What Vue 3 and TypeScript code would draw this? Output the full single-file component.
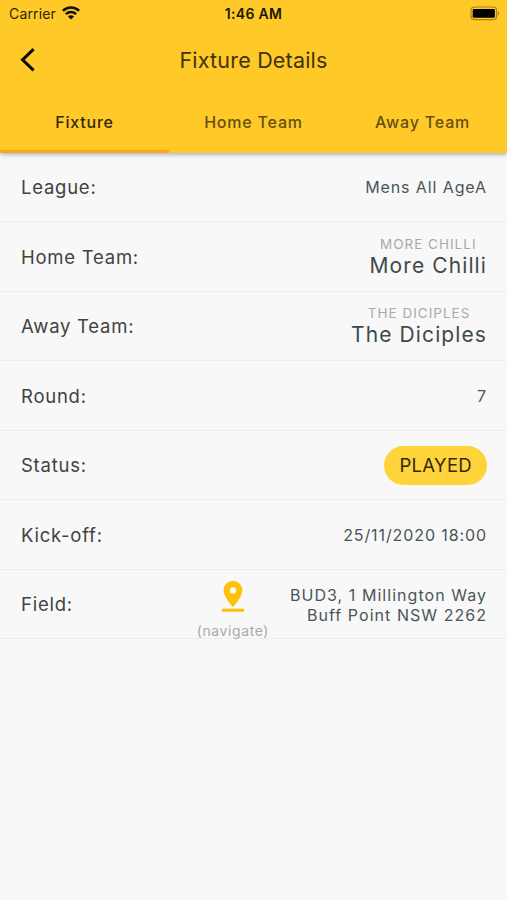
<script setup lang="ts">
import { ref } from 'vue'

interface Row {
  label: string
  kind: 'text' | 'team' | 'status' | 'field'
  value: string
  extra?: string
}

const tabs: string[] = ['Fixture', 'Home Team', 'Away Team']
const active = ref(0)

const rows: Row[] = [
  { label: 'League:', kind: 'text', value: 'Mens All AgeA' },
  { label: 'Home Team:', kind: 'team', value: 'More Chilli', extra: 'MORE CHILLI' },
  { label: 'Away Team:', kind: 'team', value: 'The Diciples', extra: 'THE DICIPLES' },
  { label: 'Round:', kind: 'text', value: '7' },
  { label: 'Status:', kind: 'status', value: 'PLAYED' },
  { label: 'Kick-off:', kind: 'text', value: '25/11/2020 18:00' },
  { label: 'Field:', kind: 'field', value: 'BUD3, 1 Millington Way', extra: 'Buff Point NSW 2262' },
]
</script>

<template>
  <div class="screen">
    <header class="header">
      <div class="statusbar">
        <div class="carrier">
          <span>Carrier</span>
          <svg class="wifi" width="18" height="14" viewBox="0 0 18 14">
            <g fill="none" stroke="#111" stroke-width="2.5">
              <path d="M0.9 4.9a11.5 11.5 0 0 1 16.2 0" />
              <path d="M3.9 8.1a7.2 7.2 0 0 1 10.2 0" />
            </g>
            <path d="M9 13.6L5.9 10.5a4.4 4.4 0 0 1 6.2 0z" fill="#111" />
          </svg>
        </div>
        <span class="clock">1:46 AM</span>
        <svg class="battery" width="30" height="15" viewBox="0 0 30 15">
          <rect x="1" y="1" width="25.6" height="12.6" rx="3.4" fill="none" stroke="#a98518" stroke-width="1.2" />
          <rect x="2.7" y="2.9" width="22.2" height="8.8" rx="1.2" fill="#000" />
          <path d="M28 5.2q2.6 2.1 0 4.2z" fill="#a98518" />
        </svg>
      </div>
      <div class="titlebar">
        <svg class="back" width="16" height="26" viewBox="0 0 16 26">
          <path d="M13.6 2.2L2.6 12.8l11 10.6" fill="none" stroke="#0c0a02" stroke-width="3" />
        </svg>
        <h1 class="title">Fixture Details</h1>
      </div>
      <nav class="tabs">
        <button
          v-for="(tab, i) in tabs"
          :key="tab"
          class="tab"
          :class="{ active: active === i }"
          @click="active = i"
        >{{ tab }}</button>
      </nav>
    </header>
    <main class="rows">
      <section v-for="row in rows" :key="row.label" class="row">
        <span class="label">{{ row.label }}</span>
        <span v-if="row.kind === 'text'" class="value">{{ row.value }}</span>
        <div v-else-if="row.kind === 'team'" class="team">
          <span class="club">{{ row.extra }}</span>
          <span class="name">{{ row.value }}</span>
        </div>
        <span v-else-if="row.kind === 'status'" class="pill">{{ row.value }}</span>
        <template v-else>
          <div class="navigate">
            <svg width="22" height="31" viewBox="0 0 22 31">
              <path
                fill="#ffc107"
                fill-rule="evenodd"
                d="M11 0C5.8 0 1.6 4.1 1.6 9.2C1.6 16 11 26 11 26S20.4 16 20.4 9.2C20.4 4.1 16.2 0 11 0zM11 6.2a3.2 3.2 0 1 1 0 6.4a3.2 3.2 0 0 1 0-6.4z"
              />
              <rect x="0" y="27.7" width="22" height="3" fill="#ffc107" />
            </svg>
            <span>(navigate)</span>
          </div>
          <div class="address">
            <span>{{ row.value }}</span>
            <span>{{ row.extra }}</span>
          </div>
        </template>
      </section>
    </main>
  </div>
</template>

<style>
body {
  background: #f8f8f8;
}
</style>

<style scoped>
.screen {
  height: 900px;
  overflow: hidden;
  background: #f8f8f8;
  font-family: Inter, 'Open Sans', sans-serif;
}
.header {
  position: relative;
  height: 152.5px;
  background: #ffc928;
  box-shadow: 0 1px 5px rgba(30, 50, 60, 0.45);
}
.statusbar {
  display: grid;
  grid-template-columns: 1fr auto 1fr;
  align-items: center;
  height: 27px;
  padding: 0 6px 0 9px;
  font-size: 14px;
  color: #2c2408;
}
.carrier {
  display: flex;
  align-items: center;
  gap: 6px;
  letter-spacing: 0.15px;
}
.wifi {
  margin-top: -2px;
}
.clock {
  margin-right: 3px;
  font-weight: 600;
  color: #1c1705;
  letter-spacing: 0.35px;
}
.battery {
  justify-self: end;
  margin-right: 1px;
}
.titlebar {
  display: grid;
  grid-template-columns: 60px 1fr 60px;
  align-items: center;
  height: 66px;
}
.back {
  margin-left: 20px;
}
.title {
  margin: 0;
  text-align: center;
  font-weight: 400;
  font-size: 21.5px;
  letter-spacing: 0.2px;
  color: #40330b;
}
.tabs {
  display: flex;
  height: 59.5px;
}
.tab {
  flex: 1;
  padding: 1px 0 0;
  border: 0;
  border-bottom: 3.5px solid transparent;
  background: none;
  font-family: inherit;
  font-weight: 500;
  font-size: 16px;
  letter-spacing: 0.8px;
  color: #654f10;
}
.tab.active {
  border-bottom-color: #ffa21f;
  color: #33290a;
}
.rows {
  display: flex;
  flex-direction: column;
}
.row {
  display: flex;
  align-items: center;
  box-sizing: border-box;
  height: 69.5px;
  padding: 1px 20px 0 21px;
  border-bottom: 1px solid #eeeeee;
}
.label {
  margin-right: auto;
  font-size: 18.5px;
  letter-spacing: 0.75px;
  color: #424242;
}
.value,
.address {
  font-size: 16px;
  line-height: 20px;
  letter-spacing: 0.9px;
  color: #4b5558;
}
.team {
  display: flex;
  flex-direction: column;
  align-items: center;
}
.club {
  font-size: 13.5px;
  line-height: 18px;
  letter-spacing: 1px;
  color: #aaaaaa;
}
.name {
  font-size: 21px;
  line-height: 26px;
  letter-spacing: 1.1px;
  color: #3f484b;
}
.pill {
  padding: 0 15px;
  border-radius: 20px;
  background: #ffd43a;
  font-size: 18.5px;
  line-height: 39px;
  letter-spacing: 0.3px;
  color: #33290a;
}
.navigate {
  display: flex;
  flex-direction: column;
  align-items: center;
  gap: 9px;
  margin: 12px 21px 0 0;
  font-size: 14px;
  line-height: 19px;
  letter-spacing: 0.6px;
  color: #aaaaaa;
}
.address {
  display: flex;
  flex-direction: column;
  align-items: flex-end;
  padding-top: 1px;
  letter-spacing: 1.04px;
}
</style>
